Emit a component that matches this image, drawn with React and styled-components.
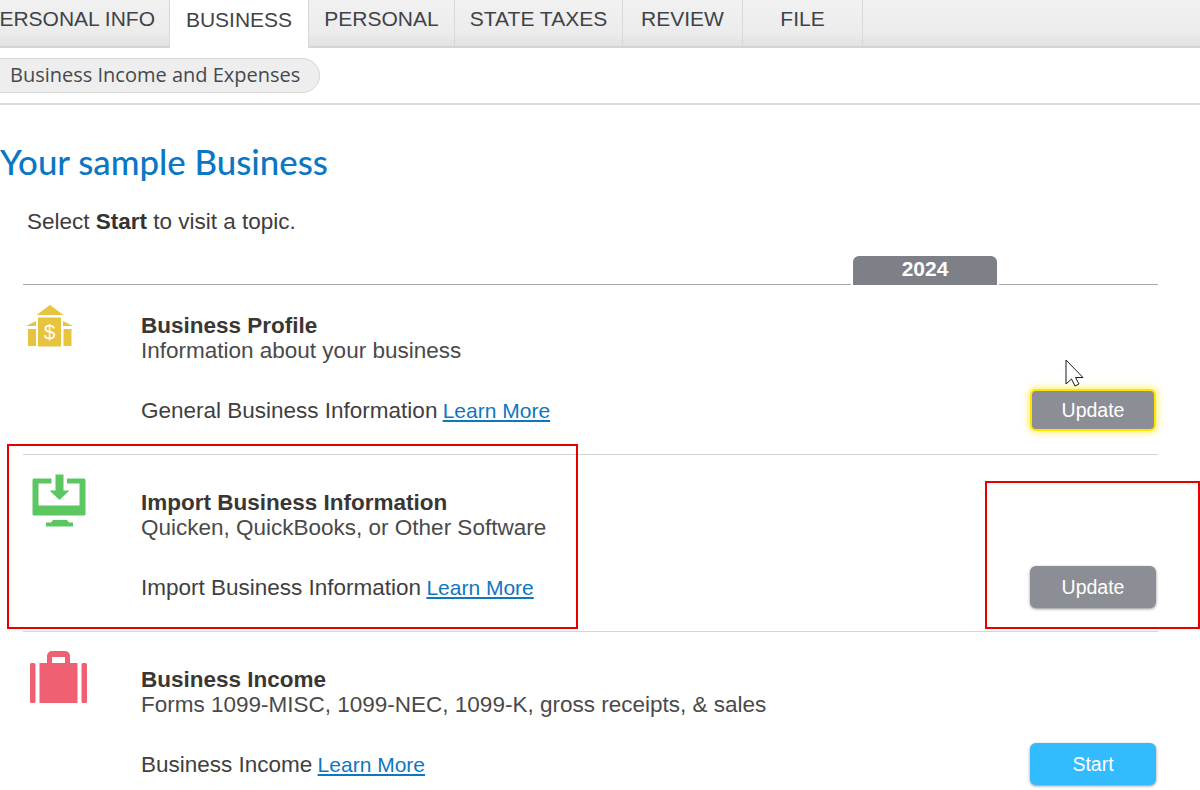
import React from "react";
import styled, { createGlobalStyle } from "styled-components";

const tabs = [
  { label: "PERSONAL INFO", width: 170, clipped: true },
  { label: "BUSINESS", width: 139, active: true },
  { label: "PERSONAL", width: 146 },
  { label: "STATE TAXES", width: 168 },
  { label: "REVIEW", width: 120 },
  { label: "FILE", width: 120 },
];

const BankIcon = () => (
  <svg width="70" height="60" viewBox="13 14 70 60">
    <g fill="#e8c33e">
      <polygon points="40,15 53.500,25 26.500,25" />
      <polygon points="16,36 26,31 26,36" />
      <polygon points="63,36 53,31 53,36" />
      <rect x="18" y="39" width="8" height="17" />
      <rect x="28" y="27.500" width="23" height="29" />
      <rect x="53.500" y="39" width="8" height="17" />
    </g>
    <text x="39.500" y="49" textAnchor="middle" fontFamily="Liberation Sans, sans-serif" fontSize="21" fill="#fff">
      $
    </text>
  </svg>
);

const MonitorIcon = () => (
  <svg width="70" height="60" viewBox="13 9 70 60">
    <path
      fill="#5cc760"
      fillRule="evenodd"
      d="M24 13.500h17.500v5H28.500v22h41v-22H57v-5h17a1.500 1.500 0 0 1 1.500 1.500v34a1.500 1.500 0 0 1-1.500 1.500H24a1.500 1.500 0 0 1-1.500-1.500V15a1.500 1.500 0 0 1 1.500-1.500z"
    />
    <path fill="#5cc760" d="M45.500 9.500h8v16h6L49.500 35l-10-9.500h6z" />
    <path fill="#5cc760" d="M43 55h14l2 2.500h4v4H36v-4h5z" />
  </svg>
);

const CaseIcon = () => (
  <svg width="70" height="60" viewBox="13 11 70 60">
    <g fill="#ef6073">
      <rect x="20" y="23" width="5.500" height="40" rx="1.500" />
      <rect x="29.500" y="23" width="38" height="40" />
      <rect x="71.500" y="23" width="5.500" height="40" rx="1.500" />
      <path d="M37 23v-7a5 5 0 0 1 5-5h13a5 5 0 0 1 5 5v7h-5v-6H42v6z" />
    </g>
  </svg>
);

const Cursor = () => (
  <CursorMark width="20" height="28" viewBox="0 0 20 28">
    <path
      d="M1 1v24l5.500-5 3.500 7 4-2-3.500-6.500H18z"
      fill="#fff"
      stroke="#1a1a1a"
      strokeWidth="1"
    />
  </CursorMark>
);

const rows = [
  {
    icon: <BankIcon />,
    title: "Business Profile",
    sub: "Information about your business",
    line: "General Business Information",
    action: "Update",
    kind: "focus",
    first: true,
  },
  {
    icon: <MonitorIcon />,
    title: "Import Business Information",
    sub: "Quicken, QuickBooks, or Other Software",
    line: "Import Business Information",
    action: "Update",
    kind: "done",
  },
  {
    icon: <CaseIcon />,
    title: "Business Income",
    sub: "Forms 1099-MISC, 1099-NEC, 1099-K, gross receipts, & sales",
    line: "Business Income",
    action: "Start",
    kind: "start",
    last: true,
  },
];

const App = () => {
  return (
    <>
      <GlobalStyle />
      <Page>
        <TabBar>
          {tabs.map((tab) => (
            <Tab key={tab.label} $width={tab.width} $active={tab.active} $clipped={tab.clipped}>
              {tab.label}
            </Tab>
          ))}
        </TabBar>
        <CrumbBar>
          <Crumb>Business Income and Expenses</Crumb>
        </CrumbBar>
        <Heading>Your sample Business</Heading>
        <Intro>
          Select <b>Start</b> to visit a topic.
        </Intro>
        <Topics>
          <YearRow>
            <YearLine $width={828} />
            <Year>2024</Year>
            <YearLine $width={159} />
          </YearRow>
          {rows.map((row) => (
            <Row key={row.title} $first={row.first} $last={row.last}>
              <IconCell>{row.icon}</IconCell>
              <Body>
                <Title>{row.title}</Title>
                <Sub>{row.sub}</Sub>
                <ActionLine>
                  <span>
                    {row.line} <LearnMore href="#">Learn More</LearnMore>
                  </span>
                  <ActionButton $kind={row.kind}>{row.action}</ActionButton>
                </ActionLine>
              </Body>
            </Row>
          ))}
        </Topics>
        <RedBox $left={7} $top={444} $width={571} $height={185} />
        <RedBox $left={985} $top={481} $width={215} $height={148} />
        <Cursor />
      </Page>
    </>
  );
};

export default App;

const GlobalStyle = createGlobalStyle`
  html, body {
    margin: 0;
    padding: 0;
    background: #fff;
    overflow: hidden;
  }
`;

const Page = styled.div`
  position: relative;
  width: 1200px;
  height: 790px;
  overflow: hidden;
  font-family: "Liberation Sans", Arial, sans-serif;
  color: #444;
`;

const TabBar = styled.div`
  display: flex;
  height: 48px;
  box-sizing: border-box;
  background: linear-gradient(#f1f1f1, #ececec 70%, #e2e2e2);
  border-bottom: 2px solid #d4d4d4;
`;

const Tab = styled.div`
  width: ${({ $width }) => $width}px;
  height: ${({ $active }) => ($active ? "48px" : "46px")};
  box-sizing: border-box;
  display: flex;
  align-items: center;
  justify-content: ${({ $clipped }) => ($clipped ? "flex-end" : "center")};
  padding: ${({ $clipped }) => ($clipped ? "0 14px 8px 0" : "0 0 8px")};
  border-right: 1px solid #d8d8d8;
  background: ${({ $active }) => ($active ? "#fff" : "transparent")};
  font-size: 21px;
  color: #3f4348;
  white-space: nowrap;
  overflow: hidden;
  flex: none;
`;

const CrumbBar = styled.div`
  height: 57px;
  box-sizing: border-box;
  padding-top: 10px;
  border-bottom: 2px solid #dcdcdc;
`;

const Crumb = styled.div`
  display: inline-flex;
  align-items: center;
  height: 35px;
  box-sizing: border-box;
  margin-left: -20px;
  padding: 0 19px 2px 29px;
  border: 1px solid #d6d6d6;
  border-radius: 18px;
  background: #eeeeee;
  font-family: "Open Sans", sans-serif;
  font-size: 20px;
  color: #444a50;
`;

const Heading = styled.h1`
  margin: 36px 0 0;
  height: 42px;
  line-height: 42px;
  font-family: Lato, "Open Sans", sans-serif;
  font-size: 34.800px;
  font-weight: 500;
  color: #0a77c4;
`;

const Intro = styled.p`
  margin: 24px 0 0 27px;
  height: 30px;
  line-height: 30px;
  font-size: 22.500px;
  color: #3d3d3d;

  b {
    color: #333;
  }
`;

const Topics = styled.div`
  margin: 19px 0 0 23px;
  width: 1135px;
`;

const YearRow = styled.div`
  display: flex;
  align-items: flex-end;
  height: 29px;
`;

const YearLine = styled.div`
  width: ${({ $width }) => $width}px;
  height: 1px;
  margin-right: ${({ $width }) => ($width > 500 ? 2 : 0)}px;
  background: #a9a9a9;
`;

const Year = styled.div`
  width: 144px;
  height: 29px;
  margin-right: 2px;
  line-height: 25px;
  text-align: center;
  border-radius: 6px 6px 0 0;
  background: #7d8087;
  color: #fff;
  font-size: 21px;
  font-weight: 700;
`;

const Row = styled.div`
  display: grid;
  grid-template-columns: 118px 1fr;
  padding: ${({ $first }) => ($first ? "28px" : "35px")} 2px 23px 0;
  border-bottom: ${({ $last }) => ($last ? "0" : "1px solid #d5d5d5")};
  position: relative;
`;

const IconCell = styled.div`
  position: absolute;
  left: 0;
  top: 19px;
  line-height: 0;
`;

const Body = styled.div`
  grid-column: 2;
  font-size: 22.500px;
  line-height: 25px;
  color: #4a4a4a;
`;

const Title = styled.div`
  font-weight: 700;
  color: #3a3633;
`;

const Sub = styled.div``;

const ActionLine = styled.div`
  display: flex;
  justify-content: space-between;
  align-items: center;
  height: 42px;
  margin-top: 26px;
  color: #3f3f3f;
`;

const LearnMore = styled.a`
  margin-left: -1px;
  font-size: 21px;
  color: #0f77c0;
  text-decoration: underline;
`;

const buttonColors = {
  focus: "#8c8e96",
  done: "#8c8e96",
  start: "#33bbff",
};

const ActionButton = styled.button`
  width: 126px;
  height: 42px;
  padding: 0;
  border: ${({ $kind }) => ($kind === "focus" ? "2px solid #ffe600" : "0")};
  border-radius: 6px;
  background: ${({ $kind }) => buttonColors[$kind]};
  box-shadow: ${({ $kind }) =>
    $kind === "focus" ? "0 0 6px 2px rgba(255, 230, 0, 0.55)" : "0 1px 3px rgba(0, 0, 0, 0.45)"};
  color: #fff;
  font-family: "Liberation Sans", Arial, sans-serif;
  font-size: 19.500px;
`;

const RedBox = styled.div`
  position: absolute;
  left: ${({ $left }) => $left}px;
  top: ${({ $top }) => $top}px;
  width: ${({ $width }) => $width}px;
  height: ${({ $height }) => $height}px;
  box-sizing: border-box;
  border: 2px solid #e60000;
  pointer-events: none;
`;

const CursorMark = styled.svg`
  position: absolute;
  left: 1065px;
  top: 359px;
`;
